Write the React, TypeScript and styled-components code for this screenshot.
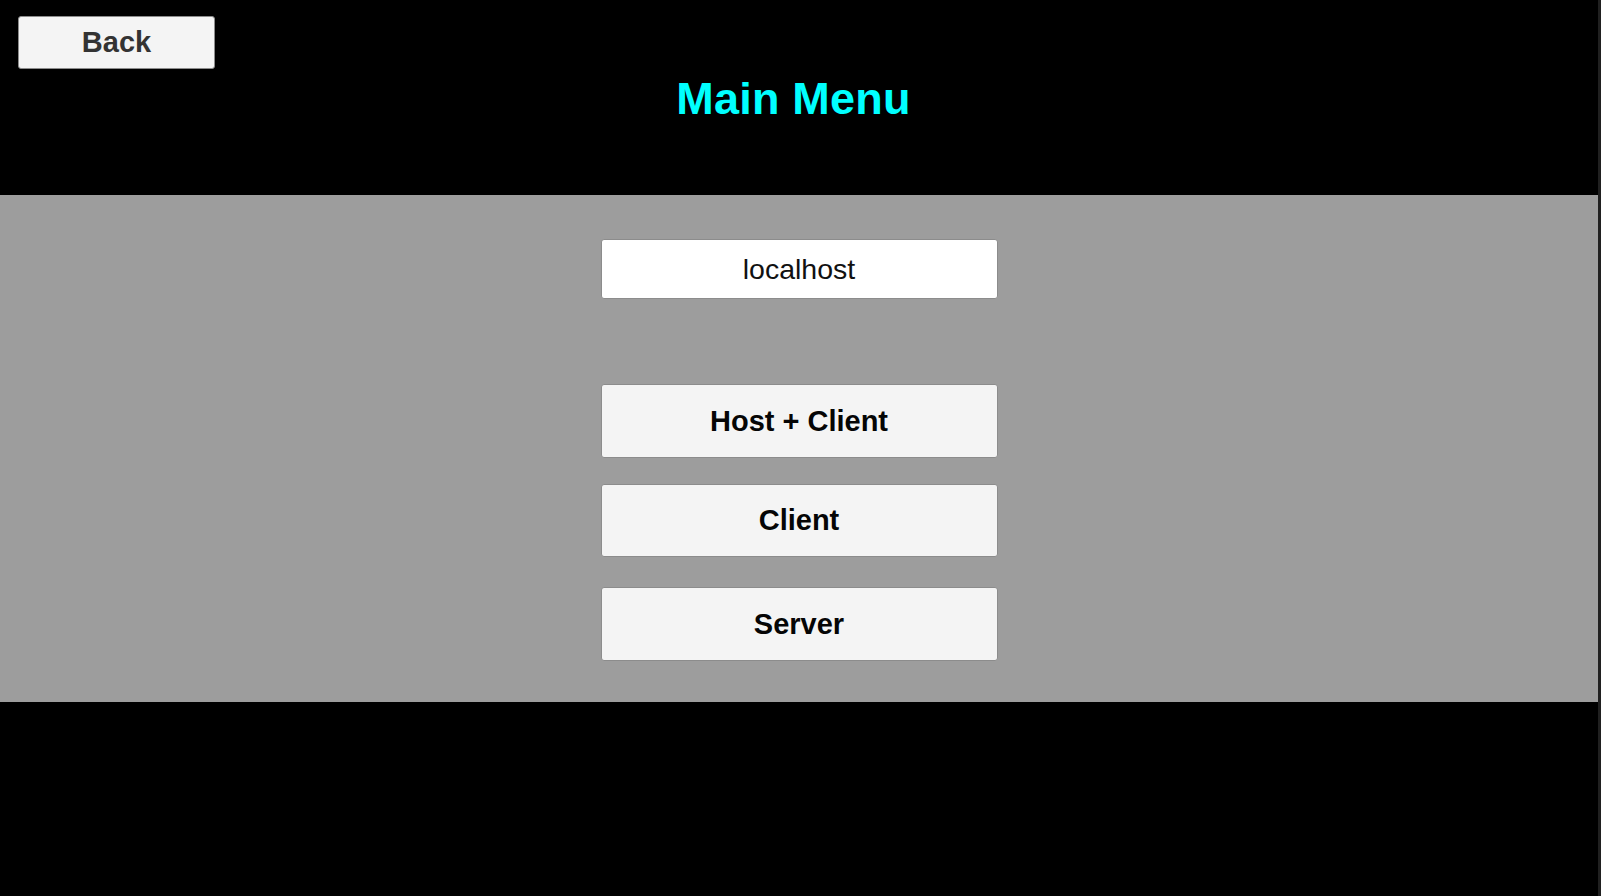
import React, { useState } from 'react'
import styled, { createGlobalStyle } from 'styled-components'

const GlobalStyle = createGlobalStyle`
  html, body {
    margin: 0;
    padding: 0;
    background: #000;
    font-family: 'Liberation Sans', Arial, sans-serif;
  }
`

const Screen = styled.div`
  display: flex;
  flex-direction: row;
  width: 100vw;
  height: 100vh;
  overflow: hidden;
  background: #000;
`

const Canvas = styled.div`
  flex: 1;
  display: flex;
  flex-direction: column;
`

// thin scrollbar-like strip on the right edge
const EdgeStrip = styled.div`
  width: 3px;
  background: #202020;
`

const Header = styled.header`
  height: 195px;
  box-sizing: border-box;
  padding: 16px 18px 0;
  display: flex;
  flex-direction: column;
`

const BackButton = styled.button`
  align-self: flex-start;
  width: 197px;
  height: 53px;
  background: #f4f4f4;
  border: 1px solid #8c8c8c;
  border-radius: 3px;
  color: #333;
  font-family: 'Liberation Sans', Arial, sans-serif;
  font-weight: 700;
  font-size: 29px;
  cursor: pointer;
`

const Title = styled.h1`
  margin: 7px 0 0;
  padding-right: 11px;
  align-self: center;
  color: #00ffff;
  font-size: 45px;
  line-height: 45px;
  font-weight: 700;
  letter-spacing: 0.2px;
`

const Panel = styled.main`
  height: 507px;
  box-sizing: border-box;
  padding-top: 44px;
  background: #9d9d9d;
  display: flex;
  flex-direction: column;
  align-items: center;
`

const AddressInput = styled.input`
  width: 397px;
  height: 60px;
  box-sizing: border-box;
  background: #fff;
  border: 1px solid #8c8c8c;
  border-radius: 3px;
  text-align: center;
  font-family: 'Liberation Sans', Arial, sans-serif;
  font-size: 28.5px;
  color: #111;
  outline: none;
  margin-bottom: 85px;
`

const MenuButton = styled.button<{ $gap: number; $h: number }>`
  width: 397px;
  height: ${(p) => p.$h}px;
  margin-bottom: ${(p) => p.$gap}px;
  box-sizing: border-box;
  background: #f4f4f4;
  border: 1px solid #8c8c8c;
  border-radius: 3px;
  color: #050505;
  font-family: 'Liberation Sans', Arial, sans-serif;
  font-weight: 700;
  font-size: 29px;
  cursor: pointer;
`

const Footer = styled.div`
  flex: 1;
  background: #000;
`

const buttons = [
  { label: 'Host + Client', h: 74, gap: 26 },
  { label: 'Client', h: 73, gap: 30 },
  { label: 'Server', h: 74, gap: 0 },
]

export default function App() {
  const [address, setAddress] = useState('localhost')

  return (
    <>
      <GlobalStyle />
      <Screen>
        <Canvas>
          <Header>
            <BackButton>Back</BackButton>
            <Title>Main Menu</Title>
          </Header>
          <Panel>
            <AddressInput value={address} onChange={(e) => setAddress(e.target.value)} />
            {buttons.map((b) => (
              <MenuButton key={b.label} $h={b.h} $gap={b.gap}>
                {b.label}
              </MenuButton>
            ))}
          </Panel>
          <Footer />
        </Canvas>
        <EdgeStrip />
      </Screen>
    </>
  )
}
